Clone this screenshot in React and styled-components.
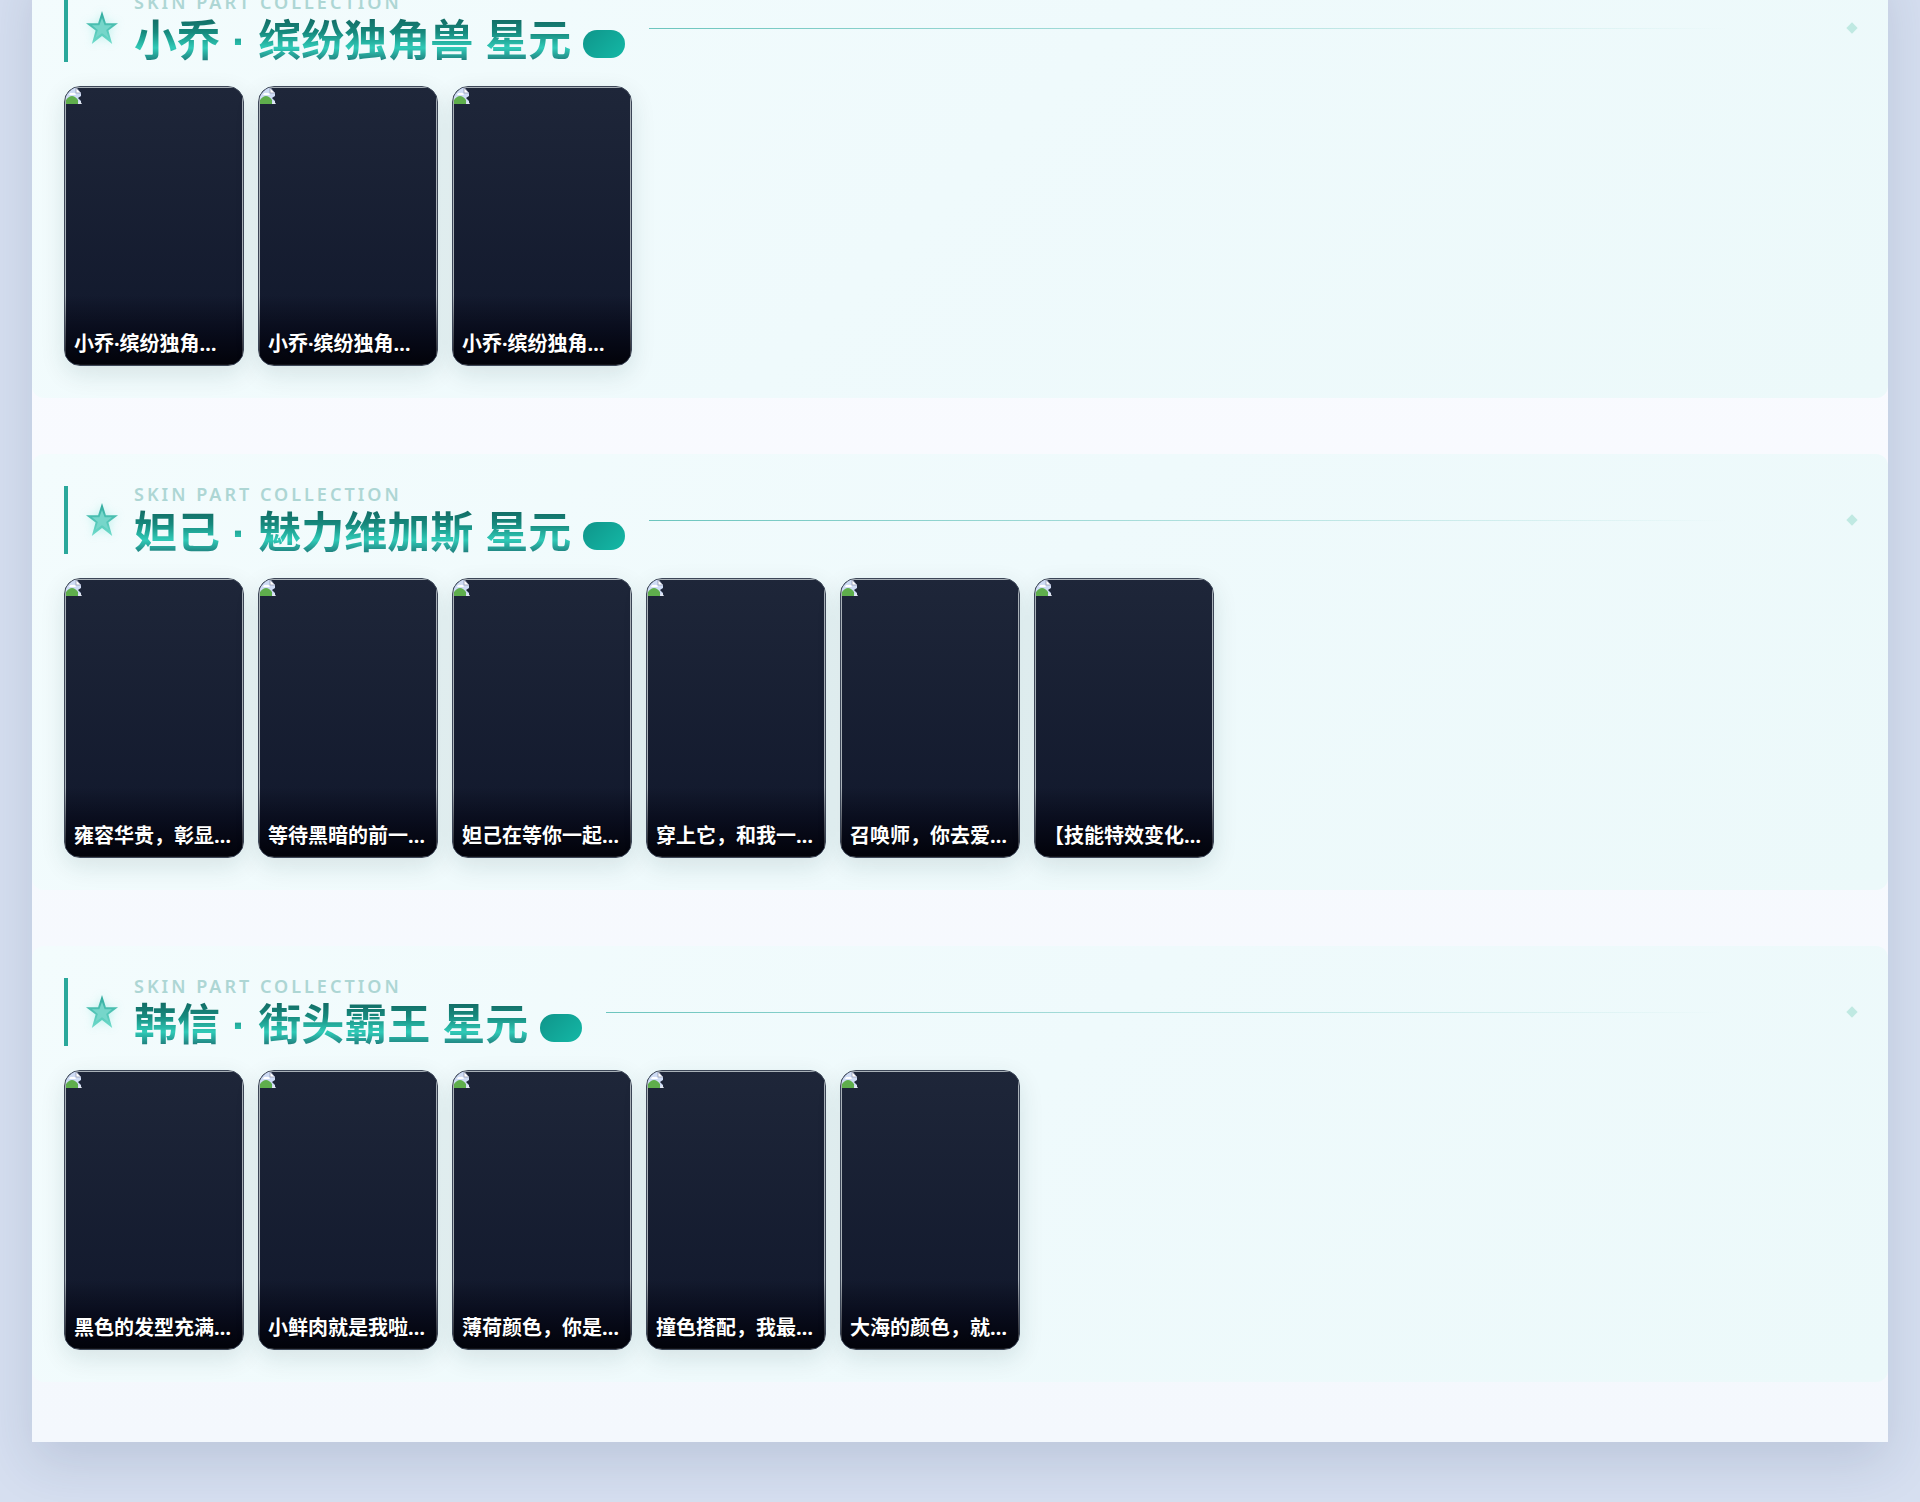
import React from 'react';
import styled, { createGlobalStyle } from 'styled-components';

const GlobalStyle = createGlobalStyle`
  * {
    box-sizing: border-box;
  }
  body {
    margin: 0;
    background: #d6dff0;
    font-family: 'Noto Sans', 'Noto Sans CJK SC', sans-serif;
  }
`;

const Page = styled.div`
  height: 100vh;
  overflow: hidden;
  display: flex;
  flex-direction: column;
  justify-content: flex-end;
  padding: 0 32px 60px;
`;

const Panel = styled.main`
  display: flex;
  flex-direction: column;
  gap: 56px;
  padding-bottom: 60px;
  background: linear-gradient(180deg, #fafbff, #f4f8fd);
  box-shadow: 0 20px 50px rgba(30, 50, 90, 0.14);
`;

const Section = styled.section`
  padding: 32px;
  border-radius: 12px;
  background: linear-gradient(135deg, #f3fcfd 0%, #effafc 50%, #ecf9fa 100%);
`;

const Header = styled.header`
  display: flex;
  align-items: center;
  height: 68px;
  margin-bottom: 24px;
  padding-left: 16px;
  border-left: 4px solid #2aa89b;
`;

const Star = styled.svg`
  flex: none;
  width: 36px;
  height: 36px;
  margin-right: 14px;
  filter: drop-shadow(0 0 4px rgba(45, 212, 191, 0.25));
`;

const Titles = styled.div`
  flex: none;
  align-self: flex-start;
`;

const Eyebrow = styled.div`
  margin-bottom: 2px;
  font-size: 18px;
  line-height: 16px;
  font-weight: 600;
  letter-spacing: 3px;
  color: #add6d4;
`;

const TitleRow = styled.div`
  display: flex;
  align-items: flex-end;
  gap: 12px;
`;

const Title = styled.h2`
  margin: 0;
  font-family: 'Liberation Sans', 'Noto Sans CJK SC', sans-serif;
  font-size: 43px;
  line-height: 58px;
  font-weight: 600;
  white-space: pre;
  color: transparent;
  background: linear-gradient(180deg, #115e59 0%, #16897d 35%, #30cbb8 62%, #1f7f7d 84%);
  background-clip: text;
`;

const Badge = styled.span`
  width: 42px;
  height: 28px;
  margin-bottom: 12px;
  border-radius: 14px;
  background: linear-gradient(135deg, #0f958a, #14b8a6);
`;

const Rule = styled.div`
  flex: 1;
  height: 1px;
  margin-left: 24px;
  background: linear-gradient(90deg, #6cc5be, rgba(108, 197, 190, 0) 90%);
`;

const Diamond = styled.span`
  width: 8px;
  height: 8px;
  background: #bfe9e2;
  transform: rotate(45deg);
`;

const Cards = styled.div`
  display: flex;
  flex-wrap: wrap;
  gap: 14px;
`;

const Card = styled.article`
  position: relative;
  width: 180px;
  height: 280px;
  overflow: hidden;
  border: 1px solid #3c4657;
  border-radius: 16px;
  background: linear-gradient(180deg, #1e2639, #10172b);
  box-shadow: 0 8px 24px rgba(15, 60, 60, 0.12);
`;

const Picture = styled.div`
  height: 100%;
  border: 1px solid #a9b1b8;
`;

const Missing = styled.svg`
  display: block;
  width: 16px;
  height: 16px;
`;

const Caption = styled.div`
  position: absolute;
  inset: auto 0 0;
  padding: 36px 9px 8px;
  background: linear-gradient(180deg, rgba(0, 0, 12, 0), rgba(0, 0, 12, 0.5) 50%, rgba(0, 0, 6, 0.9) 100%);
  color: #fff;
  font-size: 20px;
  line-height: 26px;
  font-weight: 700;
  white-space: nowrap;
  text-shadow: 0 1px 2px rgba(0, 0, 0, 0.8);
`;

const sections = [
  {
    title: '小乔 · 缤纷独角兽 星元',
    skins: ['小乔·缤纷独角…', '小乔·缤纷独角…', '小乔·缤纷独角…'],
  },
  {
    title: '妲己 · 魅力维加斯 星元',
    skins: [
      '雍容华贵，彰显…',
      '等待黑暗的前一…',
      '妲己在等你一起…',
      '穿上它，和我一…',
      '召唤师，你去爱…',
      '【技能特效变化…',
    ],
  },
  {
    title: '韩信 · 街头霸王 星元',
    skins: [
      '黑色的发型充满…',
      '小鲜肉就是我啦…',
      '薄荷颜色，你是…',
      '撞色搭配，我最…',
      '大海的颜色，就…',
    ],
  },
];

const StarIcon = () => (
  <Star viewBox="0 0 36 36" aria-hidden="true">
    <defs>
      <linearGradient id="star" x1="0" y1="0" x2="0" y2="1">
        <stop offset="0" stopColor="#2fa99d" />
        <stop offset="1" stopColor="#6fdccb" />
      </linearGradient>
    </defs>
    <path d="M18 1 L21.9 13.2 H34 L24.4 20.6 L28.2 34 L18 26 L7.8 34 L11.6 20.6 L2 13.2 H14.1 Z" fill="url(#star)" />
    <path d="M18 8 L20.6 15.2 L28 15.2 L22.2 20 L24.6 28 L18 23.2 L11.4 28 L13.8 20 L8 15.2 L15.4 15.2 Z" fill="#76d6ca" />
  </Star>
);

const MissingIcon = () => (
  <Missing viewBox="0 0 16 16" aria-hidden="true">
    <path d="M0 0 H11 L15 5 V8 L12 10 L15 13 V16 H0 Z" fill="#cfdcf5" />
    <path d="M10 0 V5 H15 Z" fill="#fff" stroke="#8d92ab" strokeWidth="0.7" />
    <path d="M3 7 Q4 4 6 5 Q9 4 10 7 H3 Z" fill="#fff" />
    <path d="M0 16 V12 Q6 4 12 12 L12 16 Z" fill="#5fae4c" />
    <path d="M12 16 L14 13 L16 16 Z" fill="#e3e8f2" />
  </Missing>
);

const SkinSection = ({ title, skins }) => (
  <Section>
    <Header>
      <StarIcon />
      <Titles>
        <Eyebrow>SKIN PART COLLECTION</Eyebrow>
        <TitleRow>
          <Title>{title}</Title>
          <Badge />
        </TitleRow>
      </Titles>
      <Rule />
      <Diamond />
    </Header>
    <Cards>
      {skins.map((skin, i) => (
        <Card key={i}>
          <Picture>
            <MissingIcon />
          </Picture>
          <Caption>{skin}</Caption>
        </Card>
      ))}
    </Cards>
  </Section>
);

const App = () => (
  <Page>
    <GlobalStyle />
    <Panel>
      {sections.map((section) => (
        <SkinSection key={section.title} {...section} />
      ))}
    </Panel>
  </Page>
);

export default App;
